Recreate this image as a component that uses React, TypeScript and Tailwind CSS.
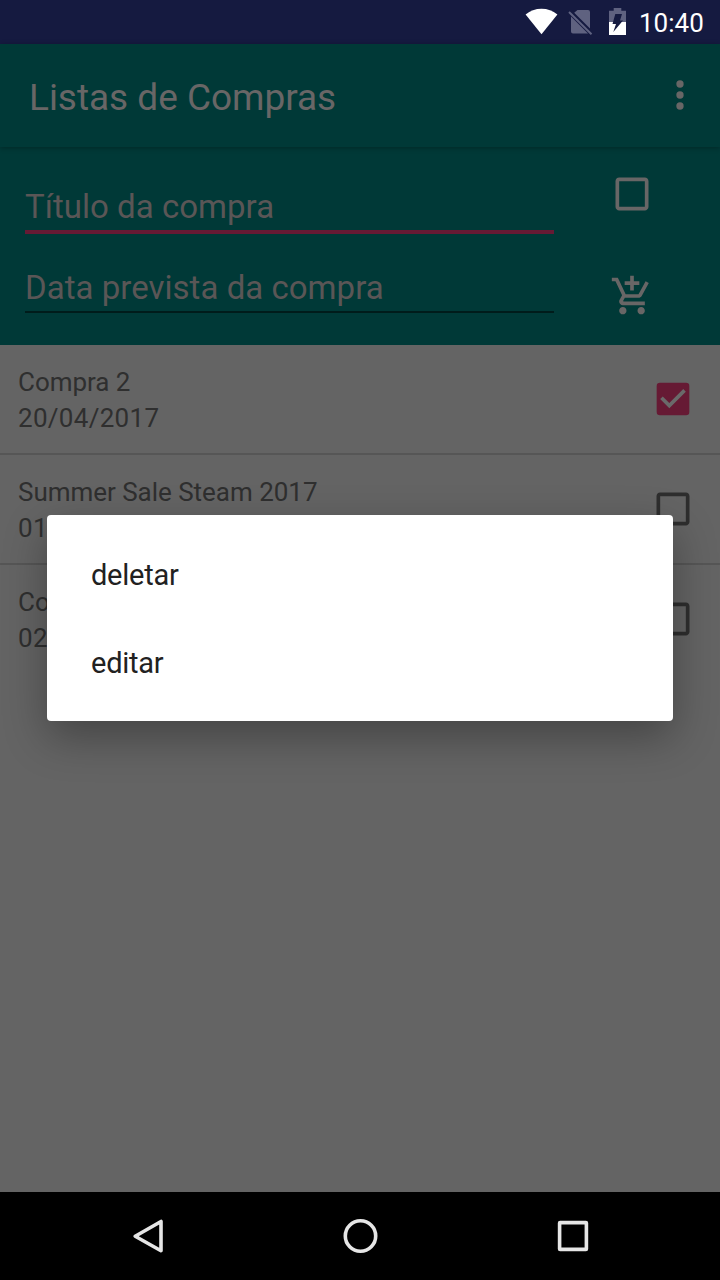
import type { ReactNode } from "react";

const rows = [
  { title: "Compra 2", date: "20/04/2017", done: true },
  { title: "Summer Sale Steam 2017", date: "01", done: false },
  { title: "Co", date: "02", done: false },
];

function Icon({ children, className }: { children: ReactNode; className: string }) {
  return (
    <svg viewBox="0 0 24 24" className={`size-11 shrink-0 fill-current ${className}`}>
      {children}
    </svg>
  );
}

function Checkbox({ checked, className }: { checked: boolean; className: string }) {
  return (
    <Icon className={className}>
      {checked ? (
        <>
          <rect x="3.1" y="3.1" width="17.8" height="17.8" rx="1.8" />
          <path className="fill-[#6a6a6a]" d="M10 17l-5-5 1.41-1.41L10 14.17l7.59-7.59L19 8z" />
        </>
      ) : (
        <path d="M19 5v14H5V5h14m0-2H5c-1.1 0-2 .9-2 2v14c0 1.100.9 2 2 2h14c1.100 0 2-.9 2-2V5c0-1.100-.9-2-2-2z" />
      )}
    </Icon>
  );
}

function StatusBar() {
  return (
    <div className="flex h-11 shrink-0 items-center justify-end bg-[#151a40] text-white">
      <svg viewBox="525 0 105 44" className="h-11 w-[105px]">
        <path fill="#fff" d="M541.500 34.300L525.600 14.400Q532.500 8.700 541.500 8.700T557.400 14.400Z" />
        <path fill="#5f6280" d="M577.500 10H588a2 2 0 0 1 2 2V28.500L574.200 12.800ZM571 16.500L588 33.500H573a2 2 0 0 1-2-2Z" />
        <path stroke="#5f6280" strokeWidth="2" d="M569 12L591.500 34.200" />
        <path fill="#5f6280" d="M613.700 8H621.300V10.700H626V22H609V10.700H613.700Z" />
        <path fill="#fff" d="M609 22H626V35H609Z" />
        <path fill="#151a40" d="M615.300 14H622L620 20.500H623L613.300 32L616 24H612.500Z" />
      </svg>
      <span className="ml-[9px] mr-4 w-[65px] whitespace-nowrap pt-0.5 text-[26px] leading-none">10:40</span>
    </div>
  );
}

export default function App() {
  return (
    <div className="relative flex h-[1280px] w-[720px] flex-col overflow-hidden bg-[#646464] font-[Roboto,sans-serif]">
      <StatusBar />
      <header className="relative z-10 flex h-[103px] shrink-0 items-center justify-between bg-[#003937] pl-[29px] pr-[18px] text-[#686666] shadow-[0_1px_5px_rgba(0,0,0,0.3)]">
        <h1 className="pt-1 text-[37px] leading-none tracking-[-0.03px]">Listas de Compras</h1>
        <Icon className="mb-[2px]">
          <circle cx="12" cy="6" r="2" />
          <circle cx="12" cy="12" r="2" />
          <circle cx="12" cy="18" r="2" />
        </Icon>
      </header>
      <section className="flex h-[198px] shrink-0 bg-[#003937] pl-[25px]">
        <div className="flex w-[529px] flex-col text-[33px] leading-[38px] tracking-[0.03px] text-[#5a5656]">
          <div className="flex h-[87px] flex-col justify-end border-b-4 border-[#661a34] pb-[4px]">Título da compra</div>
          <div className="flex h-[79px] flex-col justify-end border-b-2 border-[#001c1b] pb-[4px]">Data prevista da compra</div>
        </div>
        <div className="flex flex-col gap-[58px] pl-14 pt-[25px] text-[#686666]">
          <Checkbox checked={false} className="" />
          <Icon className="">
            <path d="M11 9h2V6h3V4h-3V1h-2v3H8v2h3v3zm-4 9c-1.100 0-1.990.9-1.990 2S5.900 22 7 22s2-.9 2-2-.9-2-2-2zm10 0c-1.100 0-1.990.9-1.990 2s.89 2 1.990 2 2-.9 2-2-.9-2-2-2zm-9.830-3.250l.03-.12.9-1.630h7.450c.75 0 1.410-.41 1.750-1.030l3.860-7.010L19.420 4h-.01l-1.100 2-2.760 5H8.530l-.13-.27L6.160 6l-.95-2-.94-2H1v2h2l3.600 7.590-1.350 2.450c-.16.28-.25.61-.25.96 0 1.100.9 2 2 2h12v-2H7.420c-.13 0-.25-.11-.25-.25z" />
          </Icon>
        </div>
      </section>
      <main className="flex-1">
        {rows.map((row, i) => (
          <div
            key={row.title}
            className={`flex h-[110px] items-center justify-between border-b-2 pl-[18px] pr-[25px] ${i < 2 ? "border-[#565656]" : "border-transparent"}`}
          >
            <div className="pt-[2px] text-[26px] leading-9 text-[#2f2f2f]">
              <p className="tracking-[-0.03px]">{row.title}</p>
              <p className="tracking-[0.3px]">{row.date}</p>
            </div>
            <Checkbox checked={row.done} className={row.done ? "text-[#661a34]" : "text-[#2e2e2e]"} />
          </div>
        ))}
      </main>
      <div
        role="dialog"
        className="absolute left-[47px] top-[515px] z-20 flex h-[206px] w-[626px] flex-col rounded-[4px] bg-white px-11 pt-[17px] text-[29px] tracking-[-0.25px] text-[#212121] shadow-[0_16px_44px_rgba(0,0,0,0.32)]"
      >
        <button className="flex h-[88px] shrink-0 items-center text-left">deletar</button>
        <button className="flex h-[88px] shrink-0 items-center text-left">editar</button>
      </div>
      <nav className="flex h-[88px] shrink-0 items-center justify-between bg-black pl-32 pr-[127px]">
        <svg viewBox="0 0 40 40" className="size-10" fill="none" stroke="#e6e6e6" strokeWidth="3.600" strokeLinejoin="round">
          <path d="M7.200 20.200L33 5.500V34.800Z" />
        </svg>
        <svg viewBox="0.500 0 40 40" className="size-10" fill="none" stroke="#e6e6e6" strokeWidth="3.600">
          <circle cx="20" cy="20" r="15.200" />
        </svg>
        <svg viewBox="0 0 40 40" className="size-10" fill="none" stroke="#e6e6e6" strokeWidth="3.600" strokeLinejoin="round">
          <rect x="6.600" y="6.600" width="26.800" height="26.800" rx="0.500" />
        </svg>
      </nav>
    </div>
  );
}
